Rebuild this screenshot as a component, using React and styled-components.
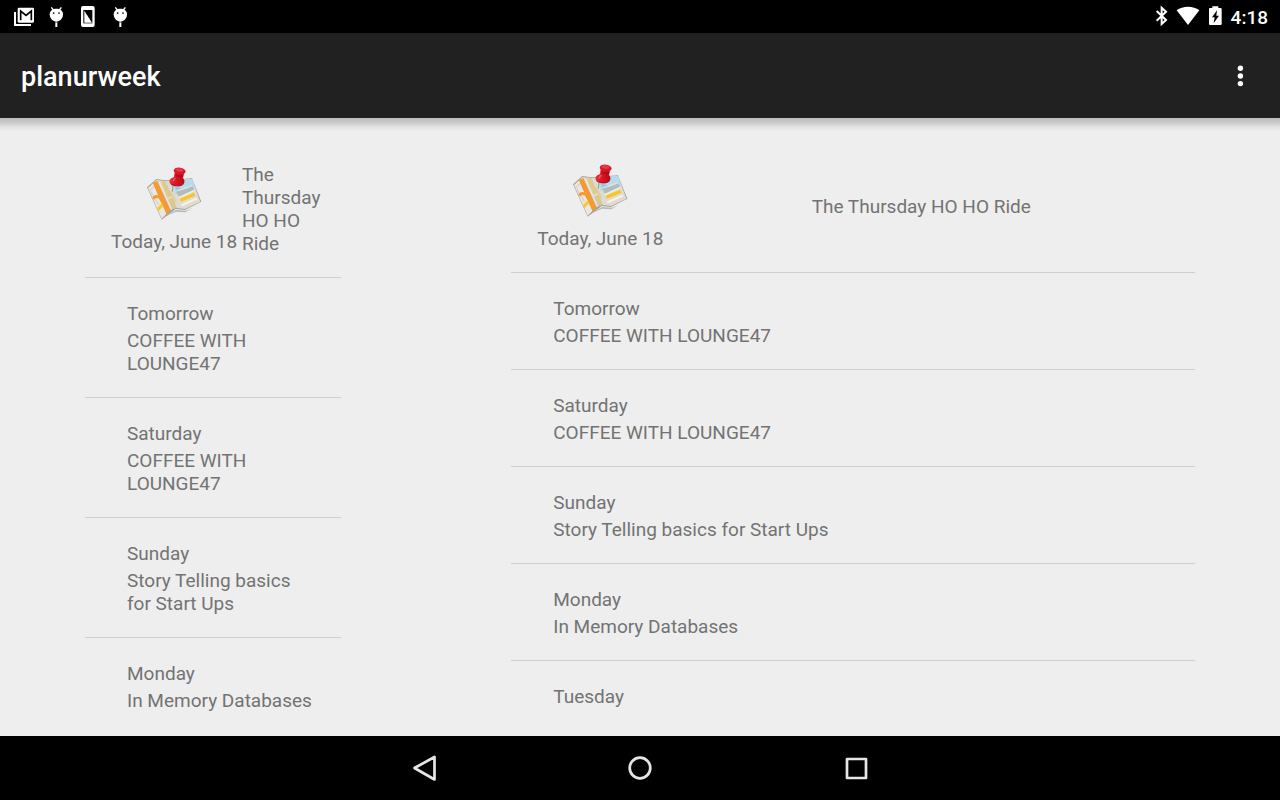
import React from "react";
import styled, { createGlobalStyle } from "styled-components";

const GlobalStyle = createGlobalStyle`
  *, *::before, *::after { box-sizing: border-box; }
  body {
    margin: 0;
    background: #eeeeee;
    color: #737373;
    font: 400 19px/23px Roboto, sans-serif;
  }
`;

const Screen = styled.div`
  display: flex;
  flex-direction: column;
  height: 100vh;
`;

const StatusBar = styled.div`
  display: flex;
  justify-content: space-between;
  flex: none;
  height: 33px;
  padding: 0 12px 0 8px;
  background: #000;
  color: #fff;
`;

const StatusGroup = styled.div`
  display: flex;
  align-items: center;
`;

const StatusIcon = styled.svg`
  display: block;
  width: ${(p) => p.$width}px;
  height: 33px;
  fill: #fff;
`;

const Clock = styled.time`
  padding-top: 2px;
  font-weight: 500;
`;

const AppBar = styled.header`
  display: flex;
  align-items: center;
  justify-content: space-between;
  flex: none;
  height: 85px;
  padding: 0 16px 0 21px;
  background: #212121;
  color: #fff;
`;

const AppTitle = styled.h1`
  margin: 0;
  padding-top: 2px;
  font-size: 27px;
  line-height: 32px;
  font-weight: 500;
`;

const IconButton = styled.button`
  display: flex;
  align-items: center;
  justify-content: center;
  width: ${(p) => p.$width}px;
  height: 64px;
  padding: 0;
  border: 0;
  background: none;
  cursor: pointer;
`;

const Content = styled.main`
  display: grid;
  grid-template-columns: 33.3% 1fr;
  grid-template-rows: minmax(0, 1fr);
  flex: 1;
  min-height: 0;
  background: linear-gradient(#bdbdbd, #c6c6c6 4px, #e2e2e2 9px, #eeeeee 13px) no-repeat top / 100% 13px;
`;

const Pane = styled.section`
  display: flex;
  min-width: 0;
  padding: 21px 85px;
`;

const DayList = styled.ul`
  flex: 1;
  min-width: 0;
  margin: 0;
  padding: 0;
  overflow: hidden;
  list-style: none;
`;

const DayRow = styled.li`
  display: flex;
  flex-direction: column;
  gap: 4px;
  padding: 24px 26px 22px 42px;
  border-bottom: 1px solid #cfcfcf;
`;

const TodayRow = styled(DayRow)`
  flex-direction: row;
  align-items: center;
  gap: 5px;
  padding: 24px 21px 22px 26px;
`;

const TodayDate = styled.div`
  display: flex;
  flex-direction: column;
  align-items: center;
  flex: none;
  white-space: nowrap;
`;

const TodayTitle = styled.div`
  display: flex;
  justify-content: center;
  flex: 1;
  min-width: 0;
`;

const MapPicture = styled.svg`
  display: block;
  width: 64px;
  height: 64px;
`;

const NavBar = styled.nav`
  display: flex;
  justify-content: center;
  flex: none;
  height: 64px;
  background: #000;
`;

const NavIcon = styled.svg`
  width: 32px;
  height: 32px;
  fill: none;
  stroke: #e6e6e6;
  stroke-width: 2.7;
  stroke-linejoin: round;
`;

const days = [
  { day: "Tomorrow", title: "COFFEE WITH LOUNGE47" },
  { day: "Saturday", title: "COFFEE WITH LOUNGE47" },
  { day: "Sunday", title: "Story Telling basics for Start Ups" },
  { day: "Monday", title: "In Memory Databases" },
  { day: "Tuesday" },
];

function DroidIcon() {
  return (
    <StatusIcon $width={32} viewBox="0 0 96 99" aria-hidden="true">
      <path d="M34 22l6 8M64 22l-6 8" stroke="#fff" strokeWidth="4" />
      <path d="M29 43C29 32 38 26 49 26s20 6 20 17c0 12-9 22-20 22S29 55 29 43z" />
      <rect x="46" y="67" width="6" height="14" />
      <circle cx="41" cy="39" r="2.6" fill="#000" />
      <circle cx="57" cy="39" r="2.6" fill="#000" />
    </StatusIcon>
  );
}

function MapIcon() {
  return (
    <MapPicture viewBox="36 30 192 192" aria-hidden="true">
      <defs>
        <linearGradient id="pinHead" x1="0" x2="1" y1="0" y2="0">
          <stop offset="0" stopColor="#e8323c" />
          <stop offset="0.45" stopColor="#dc1422" />
          <stop offset="1" stopColor="#b30c1a" />
        </linearGradient>
        <linearGradient id="foldShade" x1="0" x2="1" y1="0" y2="0.3">
          <stop offset="0" stopColor="#e3dccd" />
          <stop offset="1" stopColor="#cbc3b2" />
        </linearGradient>
        <clipPath id="leftFold"><path d="M54 96L80 72 121 162 95 188z" /></clipPath>
        <clipPath id="midFold"><path d="M80 72l26 3 34 81-19 6z" /></clipPath>
        <clipPath id="rightFold"><path d="M106 75l80-6 25 68-46 22-25-3z" /></clipPath>
      </defs>
      <path d="M100 184l38-22 30 2 20-9-22 14-28-2z" fill="#777" opacity="0.45" />
      <path d="M51 94L79 69l27 4 80-6 28 70-49 25-28-3-42 32z" fill="#a8a296" />
      <path d="M54 96L80 72 121 162 95 188z" fill="#ece7de" />
      <path d="M80 72l26 3 34 81-19 6z" fill="url(#foldShade)" />
      <path d="M106 75l80-6 25 68-46 22-25-3z" fill="#e0dbd1" />
      <g clipPath="url(#leftFold)">
        <path d="M58 104l18-15M86 146l-24-40" stroke="#d9d4ca" strokeWidth="4" />
        <path d="M76 78L119 176" stroke="#e8902a" strokeWidth="16" />
        <path d="M76 78L119 176" stroke="#f79a32" strokeWidth="12" />
        <path d="M69 129c4-9 14-10 21-4l17 26" fill="none" stroke="#f39a32" strokeWidth="9" />
        <path d="M80 164l18-18" stroke="#f9c62f" strokeWidth="9" />
      </g>
      <g clipPath="url(#midFold)">
        <path d="M88 79l37 82" stroke="#efe9dc" strokeWidth="4" />
        <path d="M98 76l36 77" stroke="#e3ca7a" strokeWidth="8" />
        <path d="M112 128l26-10" stroke="#e8dfc8" strokeWidth="5" />
      </g>
      <g clipPath="url(#rightFold)">
        <path d="M125 78l35-12 28-1 10 32-25 9-39 8z" fill="#b5dcee" />
        <path d="M138 107l30-11 18-6 10 16-48 18z" fill="#b1bcbb" />
        <path d="M142 104l26-8 18-7" fill="none" stroke="#d9e6e8" strokeWidth="4" />
        <path d="M146 125l49-22" stroke="#f3efe6" strokeWidth="5" />
        <path d="M151 133l43-18" stroke="#fac51e" strokeWidth="10" />
        <path d="M154 148l47-21" stroke="#f7f4ed" strokeWidth="6" />
        <path d="M121 105l16 33" stroke="#dfcf99" strokeWidth="6" />
      </g>
      <path d="M129 87l-2 20" stroke="#777" strokeWidth="2" />
      <path d="M134 89l22 9-18 5z" fill="#6c7b80" opacity="0.25" />
      <path d="M134 48l28 4-3 14c6 6 6 15 0 20-12 6-33 2-40-6-3-8 4-14 13-16z" fill="url(#pinHead)" />
      <path d="M120 80c8 8 29 10 41 4-4 6-12 8-22 7-10-1-18-4-19-11z" fill="#b50e1d" />
      <path d="M137 54c5 5 15 6 23 3l-1 5c-9 3-17 2-23-2z" fill="#980c18" opacity="0.6" />
      <ellipse cx="149" cy="45" rx="18" ry="10" transform="rotate(8 149 45)" fill="#d81626" />
      <ellipse cx="148" cy="42" rx="12" ry="5" transform="rotate(8 148 42)" fill="#e63a48" />
      <path d="M135 67l-6 8" stroke="#ee5a66" strokeWidth="4" strokeLinecap="round" />
    </MapPicture>
  );
}

function WeekList({ label, items }) {
  return (
    <Pane aria-label={label}>
      <DayList>
        <TodayRow>
          <TodayDate>
            <MapIcon />
            <span>Today, June 18</span>
          </TodayDate>
          <TodayTitle>
            <span>The Thursday HO HO Ride</span>
          </TodayTitle>
        </TodayRow>
        {items.map(({ day, title }) => (
          <DayRow key={day}>
            <span>{day}</span>
            {title && <span>{title}</span>}
          </DayRow>
        ))}
      </DayList>
    </Pane>
  );
}

export default function App() {
  return (
    <Screen>
      <GlobalStyle />
      <StatusBar>
        <StatusGroup>
          <StatusIcon $width={32} viewBox="24 0 96 99" aria-hidden="true">
            <path d="M45 36v39h48" fill="none" stroke="#fff" strokeWidth="6" />
            <rect x="53" y="23" width="49" height="45" rx="4" />
            <path d="M62 61V33l16 13 16-13v28" fill="none" stroke="#000" strokeWidth="5" />
          </StatusIcon>
          <DroidIcon />
          <StatusIcon $width={32} viewBox="216 0 96 99" aria-hidden="true">
            <rect x="243" y="18" width="41" height="63" rx="6" />
            <rect x="250" y="30" width="27" height="40" fill="#000" />
            <path d="M253 32l23 36h-23z" />
          </StatusIcon>
          <DroidIcon />
        </StatusGroup>
        <StatusGroup>
          <StatusIcon $width={27} viewBox="21 0 81 99" aria-hidden="true">
            <path d="M50 33l28 27-13 12V23l13 12-28 27" fill="none" stroke="#fff" strokeWidth="6" />
          </StatusIcon>
          <StatusIcon $width={27} viewBox="102 0 81 99" aria-hidden="true">
            <path d="M110 31C128 17 160 17 178 31L144 75z" />
          </StatusIcon>
          <StatusIcon $width={30} viewBox="183 0 90 99" aria-hidden="true">
            <path d="M210 24h7v-5h18v5h7q3 0 3 3v45q0 3-3 3h-32q-3 0-3-3V27q0-3 3-3z" />
            <path d="M231 31l-15 21h8l-3 18 16-23h-8z" fill="#000" />
          </StatusIcon>
          <Clock dateTime="04:18">4:18</Clock>
        </StatusGroup>
      </StatusBar>
      <AppBar>
        <AppTitle>planurweek</AppTitle>
        <IconButton type="button" $width={48} aria-label="More options">
          <svg width="8" height="24" viewBox="0 0 8 24" fill="#fff" aria-hidden="true">
            <circle cx="4.4" cy="4.2" r="2.7" />
            <circle cx="4.4" cy="12" r="2.7" />
            <circle cx="4.4" cy="19.6" r="2.7" />
          </svg>
        </IconButton>
      </AppBar>
      <Content>
        <WeekList label="Week summary" items={days.slice(0, 4)} />
        <WeekList label="Week details" items={days} />
      </Content>
      <NavBar aria-label="System navigation">
        <IconButton type="button" $width={216} aria-label="Back">
          <NavIcon viewBox="0 0 32 32"><path d="M6.5 16L26.5 5v22.5z" /></NavIcon>
        </IconButton>
        <IconButton type="button" $width={216} aria-label="Home">
          <NavIcon viewBox="0 0 32 32"><circle cx="16" cy="16" r="10.3" /></NavIcon>
        </IconButton>
        <IconButton type="button" $width={216} aria-label="Recent apps">
          <NavIcon viewBox="0 0 32 32"><rect x="7" y="7" width="19" height="19" /></NavIcon>
        </IconButton>
      </NavBar>
    </Screen>
  );
}
